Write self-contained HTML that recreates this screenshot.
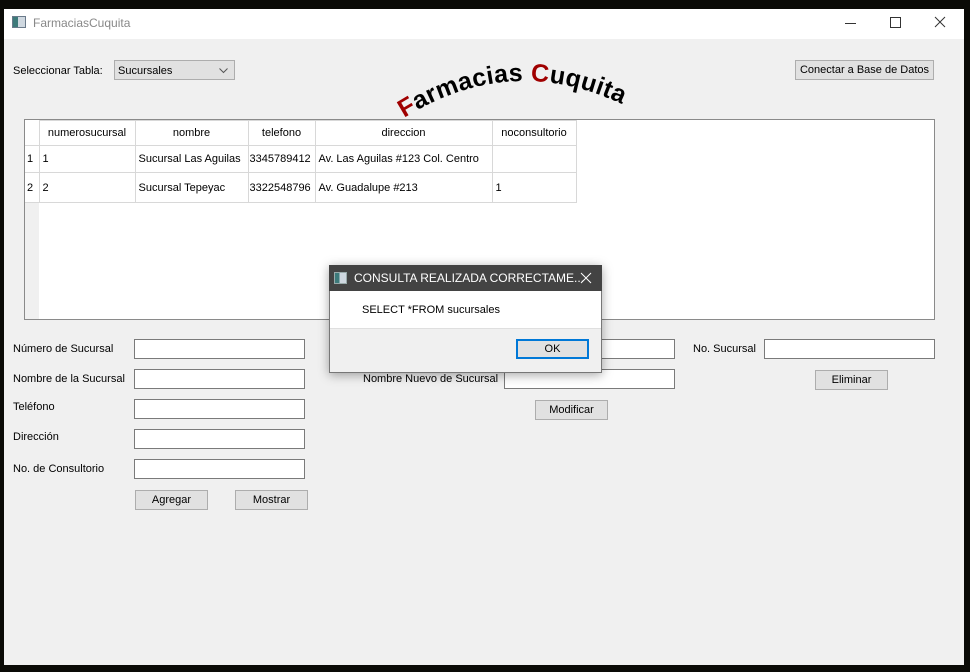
<!DOCTYPE html>
<html><head><meta charset="utf-8"><style>
*{box-sizing:border-box;margin:0;padding:0}
body{width:970px;height:672px;background:#0a0a06;position:relative;overflow:hidden;font-family:"Liberation Sans",sans-serif;font-size:11px;color:#000}
.a{position:absolute}
.win{left:4px;top:9px;width:960px;height:656px;background:#f0f0f0}
.tb{left:4px;top:9px;width:960px;height:30px;background:#fff}
.in{position:absolute;background:#fff;border:1px solid #7a7a7a;height:20px}
.btn{position:absolute;background:#e1e1e1;border:1px solid #adadad;height:20px;text-align:center;line-height:19px}
.lbl{position:absolute;white-space:nowrap}
table{border-collapse:collapse;font-size:11px}
td{border:1px solid #d8d8d8;padding:0 3px;white-space:nowrap}
</style></head><body>
<div class="a win"></div>
<div class="a tb"></div>
<div class="a" style="left:12px;top:16px;width:14px;height:12px;border:1px solid #6a7a8a;background:linear-gradient(90deg,#3d7a7a 40%,#cfd8e0 40%)"></div>
<div class="lbl" style="left:33px;top:16px;color:#888;font-size:12px">FarmaciasCuquita</div>
<div class="a" style="left:845px;top:23px;width:11px;height:1px;background:#333"></div>
<div class="a" style="left:890px;top:17px;width:11px;height:11px;border:1px solid #333"></div>
<svg class="a" style="left:934px;top:16px" width="12" height="12"><path d="M1,1L11,11M11,1L1,11" stroke="#333" stroke-width="1"/></svg>

<div class="lbl" style="left:13px;top:65px">Seleccionar Tabla:</div>
<div class="btn" style="left:114px;top:60px;width:121px;text-align:left;padding-left:3px;line-height:20px">Sucursales<svg style="position:absolute;right:6px;top:7px" width="9" height="6"><path d="M0.5,0.5L4.5,4.5L8.5,0.5" stroke="#555" fill="none"/></svg></div>
<div class="btn" style="left:795px;top:60px;width:139px;height:20px">Conectar a Base de Datos</div>

<svg class="a" style="left:0;top:0" width="970" height="140">
<path id="arc" d="M404,118 Q523,44 648,118" fill="none"/>
<text font-family="Liberation Sans,sans-serif" font-weight="bold" font-size="25" letter-spacing="0.3"><textPath href="#arc" startOffset="0"><tspan fill="#a00000">F</tspan><tspan fill="#000">armacias </tspan><tspan fill="#a00000">C</tspan><tspan fill="#000">uquita</tspan></textPath></text>
</svg>

<div class="a" style="left:24px;top:119px;width:911px;height:201px;background:#fff;border:1px solid #8a8a8a"></div>
<div class="a" style="left:25px;top:202px;width:14px;height:117px;background:#f0f0f0"></div>
<table class="a" style="left:25px;top:120px">
<tr style="height:25px"><td style="border-top:0;border-left:0;width:14px"></td><td style="text-align:center;width:96px">numerosucursal</td><td style="text-align:center;width:113px">nombre</td><td style="text-align:center;width:67px">telefono</td><td style="text-align:center;width:177px">direccion</td><td style="text-align:center;width:84px">noconsultorio</td></tr>
<tr style="height:27px"><td style="border-left:0;padding:0 2px">1</td><td>1</td><td>Sucursal Las Aguilas</td><td style="padding:0 1px">3345789412</td><td>Av. Las Aguilas #123 Col. Centro</td><td></td></tr>
<tr style="height:30px"><td style="border-left:0;padding:0 2px">2</td><td>2</td><td>Sucursal Tepeyac</td><td style="padding:0 1px">3322548796</td><td>Av. Guadalupe #213</td><td>1</td></tr>
</table>

<div class="lbl" style="left:13px;top:343px">Número de Sucursal</div>
<div class="lbl" style="left:13px;top:373px">Nombre de la Sucursal</div>
<div class="lbl" style="left:13px;top:401px">Teléfono</div>
<div class="lbl" style="left:13px;top:431px">Dirección</div>
<div class="lbl" style="left:13px;top:463px">No. de Consultorio</div>
<div class="in" style="left:134px;top:339px;width:171px"></div>
<div class="in" style="left:134px;top:369px;width:171px"></div>
<div class="in" style="left:134px;top:399px;width:171px"></div>
<div class="in" style="left:134px;top:429px;width:171px"></div>
<div class="in" style="left:134px;top:459px;width:171px"></div>
<div class="btn" style="left:135px;top:490px;width:73px">Agregar</div>
<div class="btn" style="left:235px;top:490px;width:73px">Mostrar</div>

<div class="in" style="left:504px;top:339px;width:171px"></div>
<div class="lbl" style="left:363px;top:373px">Nombre Nuevo de Sucursal</div>
<div class="in" style="left:504px;top:369px;width:171px"></div>
<div class="btn" style="left:535px;top:400px;width:73px">Modificar</div>

<div class="lbl" style="left:693px;top:343px">No. Sucursal</div>
<div class="in" style="left:764px;top:339px;width:171px"></div>
<div class="btn" style="left:815px;top:370px;width:73px">Eliminar</div>

<div class="a" style="left:329px;top:265px;width:273px;height:108px;background:#f0f0f0;border:1px solid #777;box-shadow:0 2px 10px rgba(0,0,0,.35)"></div>
<div class="a" style="left:329px;top:265px;width:273px;height:26px;background:#434343"></div>
<div class="a" style="left:334px;top:272px;width:13px;height:12px;border:1px solid #9aa;background:linear-gradient(90deg,#3d7a7a 40%,#cfd8e0 40%)"></div>
<div class="lbl" style="left:354px;top:271px;color:#fff;font-size:12px">CONSULTA REALIZADA CORRECTAME...</div>
<svg class="a" style="left:580px;top:272px" width="12" height="12"><path d="M1,1L11,11M11,1L1,11" stroke="#fff" stroke-width="1"/></svg>
<div class="a" style="left:330px;top:291px;width:271px;height:38px;background:#fff;border-bottom:1px solid #dfdfdf"></div>
<div class="lbl" style="left:362px;top:304px">SELECT *FROM sucursales</div>
<div class="btn" style="left:516px;top:339px;width:73px;border:2px solid #0078d7;line-height:17px">OK</div>
</body></html>
